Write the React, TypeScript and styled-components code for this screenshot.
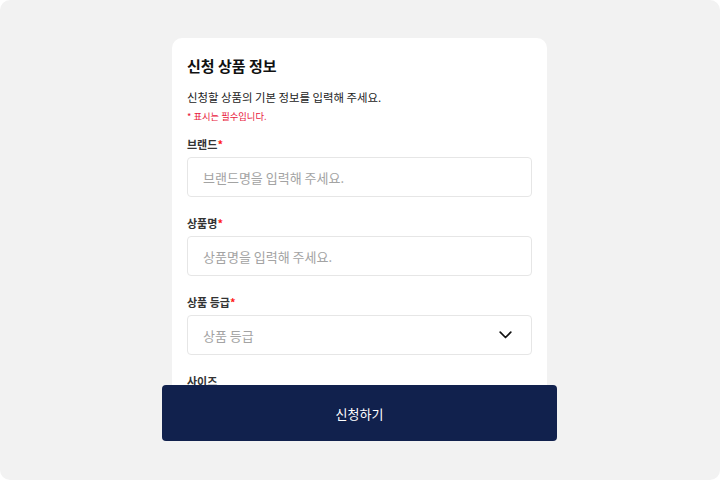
import React from 'react';
import styled, { createGlobalStyle } from 'styled-components';

const GlobalStyle = createGlobalStyle`
  html, body {
    margin: 0;
    padding: 0;
    background: #ffffff;
  }
  * {
    box-sizing: border-box;
  }
  body {
    font-family: "Noto Sans CJK KR", "Noto Sans", sans-serif;
  }
`;

const StyledFrame = styled.div`
  width: 720px;
  height: 480px;
  background-color: #f2f2f2;
  border-radius: 10px;
  display: flex;
  justify-content: center;
  padding: 38px 1px 0 0;
  overflow: hidden;
`;

const StyledSheet = styled.div`
  position: relative;
  width: 395px;
  height: 403px;
`;

const StyledCard = styled.div`
  margin: 0 10px;
  height: 100%;
  background-color: #ffffff;
  border-radius: 10px 10px 0 0;
  padding: 18px 15px 0;
  overflow: hidden;
  display: flex;
  flex-direction: column;
`;

const StyledTitle = styled.h2`
  margin: 0;
  font-size: 15px;
  line-height: 20px;
  font-weight: 700;
  color: #111111;
`;

const StyledDesc = styled.p`
  margin: 12px 0 0;
  font-size: 11.4px;
  line-height: 18px;
  color: #222222;
`;

const StyledNote = styled.p`
  margin: 4px 0 0;
  font-size: 9.3px;
  line-height: 12px;
  color: #e8193c;
`;

const StyledField = styled.div<{ $first?: boolean }>`
  margin-top: ${({ $first }) => ($first ? '14px' : '18px')};
  display: flex;
  flex-direction: column;
  gap: 5px;
`;

const StyledLabel = styled.label`
  font-size: 11px;
  line-height: 16px;
  font-weight: 700;
  color: #333333;
  span {
    color: #ff1a1a;
  }
`;

const StyledInput = styled.input`
  width: 100%;
  height: 40px;
  border: 1px solid #e6e6e6;
  border-radius: 4px;
  padding: 0 15px;
  font-family: inherit;
  font-size: 13px;
  color: #222222;
  outline: none;
  &::placeholder {
    color: #a3a3a3;
  }
`;

const StyledSelect = styled.div`
  width: 100%;
  height: 40px;
  border: 1px solid #e6e6e6;
  border-radius: 4px;
  padding: 0 19px 0 15px;
  display: flex;
  align-items: center;
  justify-content: space-between;
  font-size: 13px;
  color: #a3a3a3;
`;

const StyledButton = styled.button`
  position: absolute;
  left: 0;
  bottom: 0;
  width: 100%;
  height: 56px;
  border: none;
  border-radius: 4px;
  background-color: #11214d;
  color: #ffffff;
  font-family: inherit;
  font-size: 13px;
  cursor: pointer;
`;

const Chevron = () => (
  <svg width="13" height="8" viewBox="0 0 13 8" fill="none">
    <path
      d="M1.2 1.2l5.3 5.3 5.3-5.3"
      stroke="#111111"
      strokeWidth="1.7"
      strokeLinecap="round"
      strokeLinejoin="round"
    />
  </svg>
);

const App = () => {
  return (
    <>
      <GlobalStyle />
      <StyledFrame>
        <StyledSheet>
          <StyledCard>
            <StyledTitle>신청 상품 정보</StyledTitle>
            <StyledDesc>신청할 상품의 기본 정보를 입력해 주세요.</StyledDesc>
            <StyledNote>* 표시는 필수입니다.</StyledNote>

            <StyledField $first>
              <StyledLabel>
                브랜드<span>*</span>
              </StyledLabel>
              <StyledInput placeholder="브랜드명을 입력해 주세요." />
            </StyledField>

            <StyledField>
              <StyledLabel>
                상품명<span>*</span>
              </StyledLabel>
              <StyledInput placeholder="상품명을 입력해 주세요." />
            </StyledField>

            <StyledField>
              <StyledLabel>
                상품 등급<span>*</span>
              </StyledLabel>
              <StyledSelect>
                상품 등급
                <Chevron />
              </StyledSelect>
            </StyledField>

            <StyledField>
              <StyledLabel>사이즈</StyledLabel>
              <StyledInput placeholder="사이즈를 입력해 주세요." />
            </StyledField>
          </StyledCard>
          <StyledButton>신청하기</StyledButton>
        </StyledSheet>
      </StyledFrame>
    </>
  );
};

export default App;
